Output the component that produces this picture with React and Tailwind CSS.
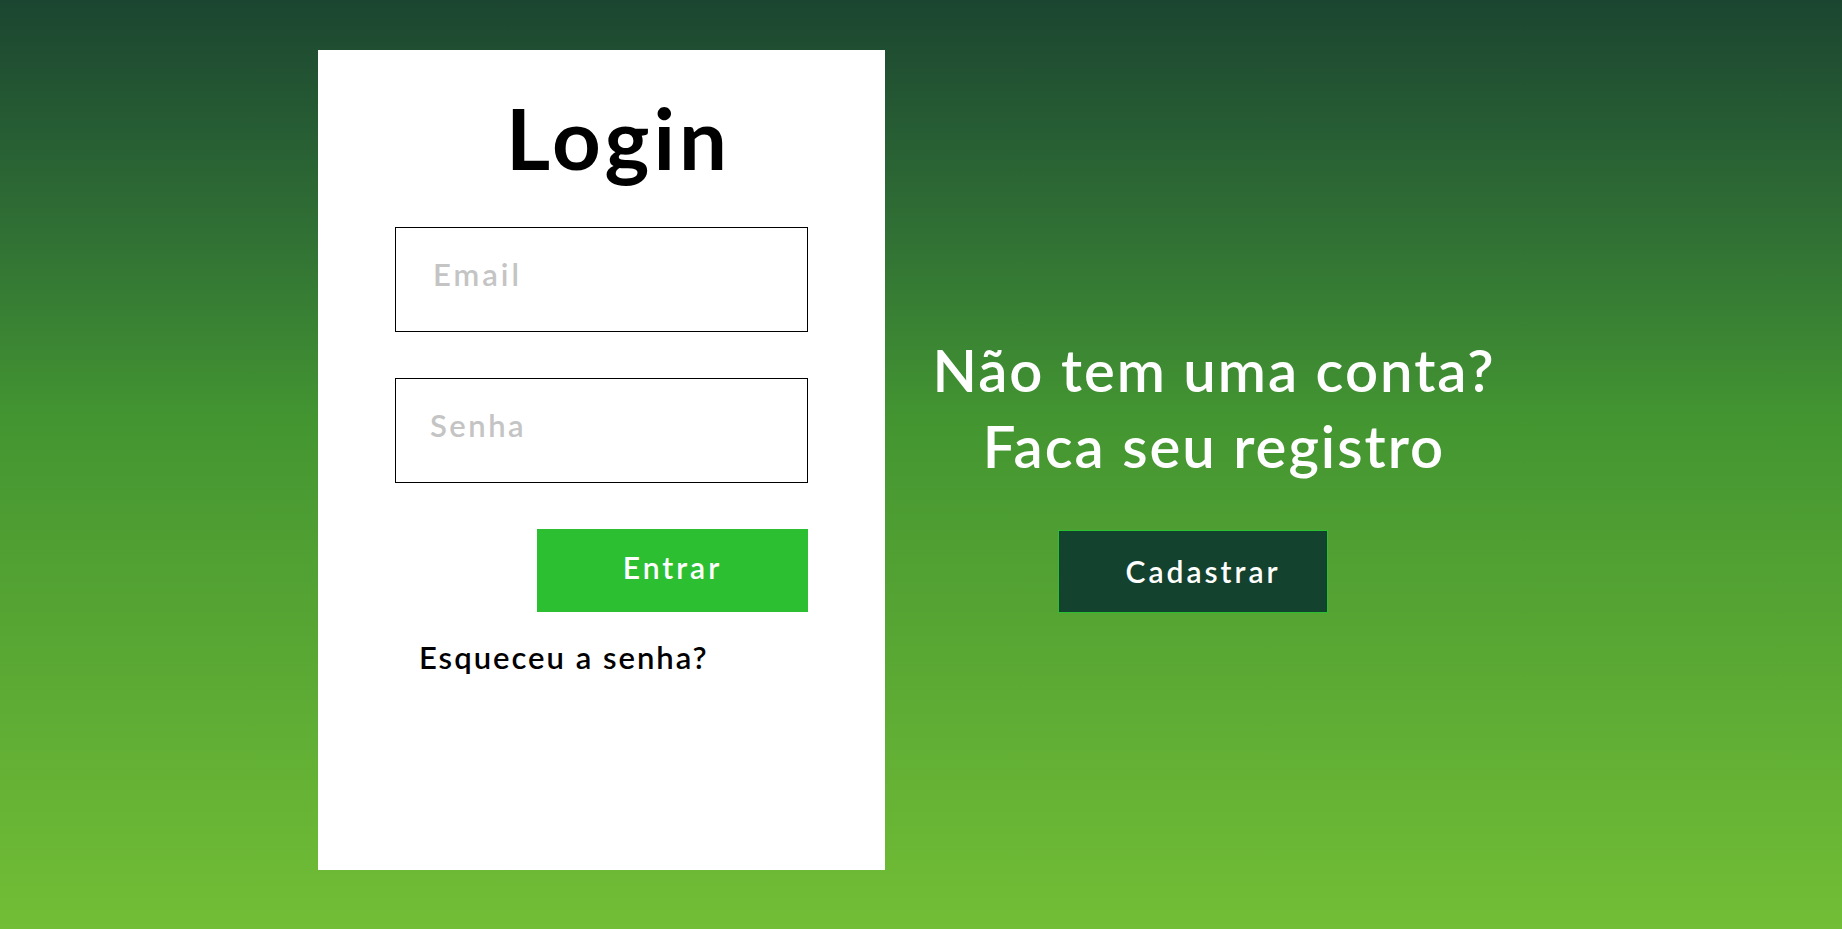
import { useState } from "react";

export default function App() {
  const [email, setEmail] = useState("");
  const [senha, setSenha] = useState("");

  return (
    <div
      className="min-h-[929px] w-full bg-gradient-to-b from-[#1b4530] via-[#439531] via-45% to-[#72be36] flex"
      style={{ fontFamily: "Lato, 'Open Sans', sans-serif" }}
    >
      {/* --- Login card --- */}
      <div className="ml-[318px] mt-[50px] w-[567px] h-[820px] bg-white flex flex-col items-center">
        <h1 className="mt-[45px] ml-[34px] text-[85px] leading-none font-bold text-black tracking-[4px]">
          Login
        </h1>

        <form className="mt-[47px] w-[413px] flex flex-col" onSubmit={(e) => e.preventDefault()}>
          <input
            type="email"
            value={email}
            onChange={(e) => setEmail(e.target.value)}
            placeholder="Email"
            className="h-[105px] w-full border border-black px-[37px] pb-[12px] text-[31px] font-semibold tracking-[3px] text-black placeholder:text-[#c4c4c4] outline-none"
          />
          <input
            type="password"
            value={senha}
            onChange={(e) => setSenha(e.target.value)}
            placeholder="Senha"
            className="mt-[46px] h-[105px] w-full border border-black px-[34px] pb-[12px] text-[31px] font-semibold tracking-[2.5px] text-black placeholder:text-[#c4c4c4] outline-none"
          />
          <button
            type="submit"
            className="mt-[46px] self-end w-[271px] h-[83px] bg-[#2cbf32] pb-[6px] text-white text-[30px] font-semibold tracking-[3px]"
          >
            Entrar
          </button>
          <a href="#" className="mt-[30px] ml-[24px] text-[31px] font-semibold text-black leading-none tracking-[2px]">
            Esqueceu a senha?
          </a>
        </form>
      </div>

      {/* --- Register call --- */}
      <div className="flex-1 max-w-[658px] flex flex-col items-center pt-[332px]">
        <p className="text-white text-[58px] font-semibold leading-[76px] text-center tracking-[2px]">
          Não tem uma conta?
          <br />
          Faca seu registro
        </p>
        <button className="mt-[46px] ml-[-42px] w-[270px] h-[83px] bg-[#13422f] border border-[#2cbf32] text-white text-[30px] font-semibold pl-[20px] tracking-[3px]">
          Cadastrar
        </button>
      </div>
    </div>
  );
}
